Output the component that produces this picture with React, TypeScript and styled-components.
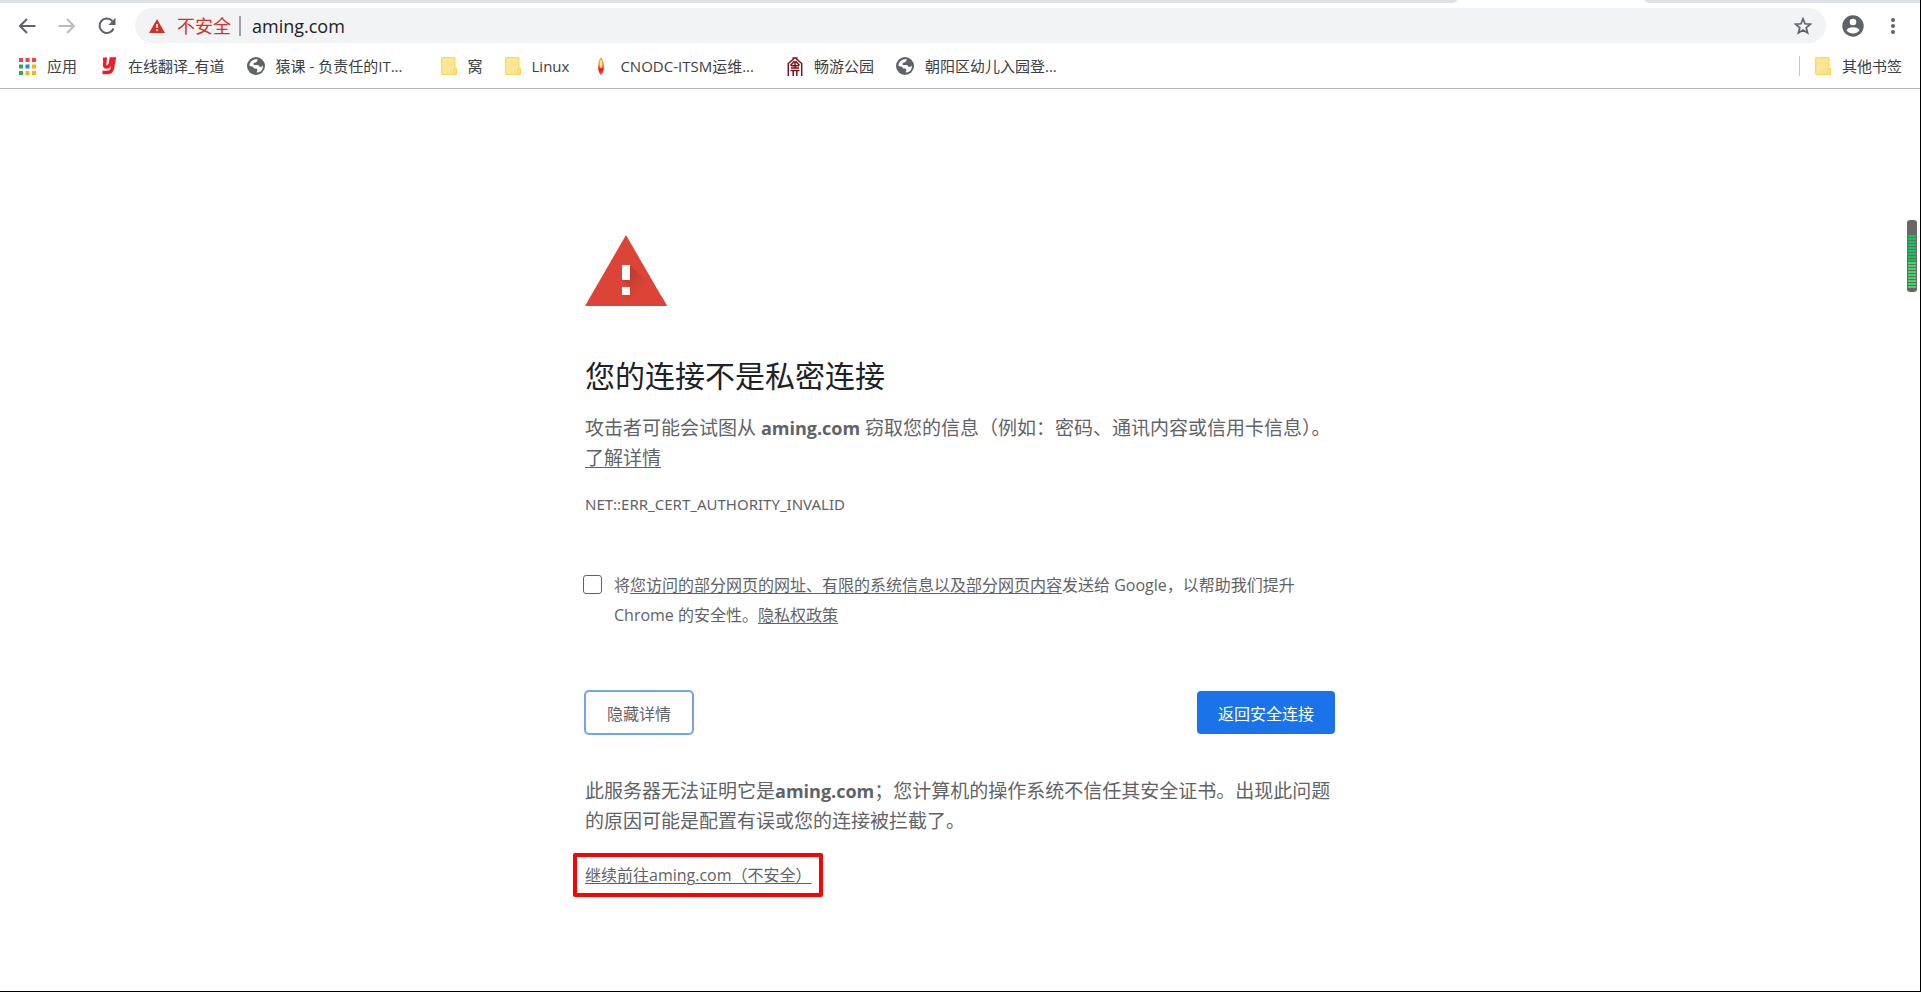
import React from "react";
import styled, { createGlobalStyle, css } from "styled-components";

const GlobalStyle = createGlobalStyle`
  * { box-sizing: border-box; }
  body {
    margin: 0;
    background: #fff;
    font-family: "Open Sans", "Noto Sans CJK SC", sans-serif;
  }
  button, input { font-family: inherit; }
`;

const Window = styled.div`
  min-height: 100vh;
  display: flex;
  flex-direction: column;
  border-right: 1px solid #000;
  border-bottom: 1px solid #000;
`;

const TabStrip = styled.div`
  display: flex;
  justify-content: flex-end;
  height: 3px;
  padding-right: 272px;
  background: #dee1e6;
`;

const ActiveTab = styled.div`
  width: 194px;
  background: #fff;
  clip-path: polygon(4px 0, 190px 0, 100% 100%, 0 100%);
`;

const Toolbar = styled.div`
  display: flex;
  align-items: center;
  gap: 20px;
  padding: 5px 17px 5px 17px;
`;

const IconButton = styled.button<{ $faded?: boolean }>`
  display: flex;
  align-items: center;
  justify-content: center;
  width: 20px;
  height: 20px;
  padding: 0;
  border: 0;
  background: none;
  color: ${(p) => (p.$faded ? "#babcbe" : "#5f6368")};
  svg { flex: none; }
`;

const Omnibox = styled.div`
  flex: 1;
  display: flex;
  align-items: center;
  height: 35px;
  margin-right: -3px;
  margin-left: -2px;
  padding: 0 13px 0 14px;
  border-radius: 18px;
  background: #f1f3f4;
`;

const SecurityLabel = styled.span`
  padding: 0 8px 0 12px;
  color: #d93025;
  font-size: 18px;
  line-height: 20px;
`;

const OmniDivider = styled.span`
  width: 2px;
  height: 20px;
  background: #9aa0a6;
`;

const UrlInput = styled.input`
  flex: 1;
  min-width: 0;
  height: 30px;
  padding: 0 11px;
  border: 0;
  outline: 0;
  background: none;
  color: #202124;
  font-size: 18px;
`;

const BookmarkBar = styled.nav`
  display: flex;
  align-items: center;
  height: 41px;
  padding: 0 18px 4px 19px;
  border-bottom: 1px solid #b6b6b6;
`;

const Bookmark = styled.a<{ $gap?: number }>`
  display: flex;
  align-items: center;
  gap: 11px;
  margin-right: ${(p) => p.$gap ?? 22}px;
  color: #3c4043;
  font-size: 15px;
  line-height: 20px;
  white-space: nowrap;
  text-decoration: none;
  svg { flex: none; }
`;

const OtherBookmarks = styled.div`
  display: flex;
  margin-left: auto;
  padding-left: 15px;
  border-left: 1px solid #c6c8ca;
`;

const Main = styled.main`
  width: 100%;
  max-width: 750px;
  margin: 0 auto;
  padding: 146px 0 40px;
  color: #5f6368;
`;

const Title = styled.h1`
  margin: 50px 0 17px;
  color: #202124;
  font-size: 30px;
  font-weight: 400;
  line-height: 40px;
`;

const Paragraph = styled.p`
  margin: 0;
  font-size: 19px;
  line-height: 30px;
`;

const Host = styled.strong`
  font-size: 18px;
`;

const TextLink = styled.a`
  color: inherit;
  text-decoration: underline;
  text-underline-offset: 2px;
  text-decoration-thickness: 1px;
`;

const ErrorCode = styled.div`
  margin: 20px 0 55px;
  font-family: "Noto Sans", "Open Sans", sans-serif;
  font-size: 15px;
  line-height: 22px;
`;

const OptIn = styled.div`
  display: flex;
  gap: 12px;
  margin-left: -2px;
  font-size: 16px;
  line-height: 30px;
`;

const CheckBox = styled.input`
  flex: none;
  appearance: none;
  width: 19px;
  height: 19px;
  margin: 5px 0 0;
  border: 1px solid #5f6368;
  border-radius: 3px;
  background: #fff;
`;

const Actions = styled.div`
  display: flex;
  justify-content: space-between;
  align-items: flex-start;
  margin: 61px 0 42px;
`;

const Button = styled.button<{ $primary?: boolean }>`
  height: 43px;
  padding: 0 21px;
  border: 0;
  border-radius: 4px;
  font-size: 16px;
  ${(p) =>
    p.$primary
      ? css`
          background: #1a73e8;
          color: #fff;
        `
      : css`
          background: #fff;
          color: #5f6368;
          border: 1px solid #7aa2dd;
          box-shadow: 0 0 0 1px #6fa3f5;
        `}
`;

const Proceed = styled.p`
  width: fit-content;
  margin: 17px 0 0 -12px;
  padding: 6px 7px 6px 8px;
  border: 4px solid #fe0000;
  border-radius: 2px;
  font-size: 16px;
  line-height: 24px;
`;

const Gauge = styled.div`
  position: absolute;
  top: 220px;
  right: 4px;
`;

const Apps = () => {
  const colors = ["#f44336", "#f44336", "#f44336", "#34a853", "#1e88e5", "#fbb30a", "#34a853", "#fbb30a", "#fbb30a"];
  return (
    <svg width="17" height="17" viewBox="0 0 17 17">
      {colors.map((c, i) => (
        <rect key={i} x={(i % 3) * 6.5} y={Math.floor(i / 3) * 6.5} width="4" height="4" fill={c} />
      ))}
    </svg>
  );
};

const Youdao = () => (
  <svg width="16" height="18" viewBox="0 0 16 18" fill="none" stroke="#ee1c25" strokeWidth="3.4">
    <path d="M2 2.2h2.2L3.6 7.4q-.3 2.6 2 2.6 2.6 0 3.6-3L10.2 2h3L11.4 11.5Q10.4 15.5 6 15.5H1.5" />
  </svg>
);

const Globe = () => (
  <svg width="18" height="18" viewBox="0 0 18 18">
    <circle cx="9" cy="9" r="9" fill="#5f6368" />
    <path fill="#fff" d="M8.3 2.2 11 2.2Q9.8 3.2 10.5 4L8.5 5.5 6.6 6v2h4.6l1.2 1.7h2.2L15.8 8.6q.6 5.5-4.7 6.9l-1.700-.2 1.2-2.4-1.2-1.5H7.2L6 9.7 2.4 8.9q.2-5.3 5.900-6.700Z" />
  </svg>
);

const Folder = () => (
  <svg width="16" height="18" viewBox="0 0 16 18">
    <path d="M1.5 0h11.500q1.500 0 1.500 1.500V11h1.500v7H1.500Q0 18 0 16.500v-15Q0 0 1.500 0Z" fill="#fbd75b" />
    <path d="M1.300 1.200h11.900V12l-1.200 1v3.700H1.300Z" fill="#ffe595" />
    <path d="M13 13h1.700v3.700H13Z" fill="#ffe595" />
  </svg>
);

const Flame = () => (
  <svg width="16" height="18" viewBox="-4 0 16 18">
    <defs>
      <linearGradient id="flame" x1="0" y1="0" x2="0" y2="1">
        <stop offset="0" stopColor="#f9b04b" />
        <stop offset=".5" stopColor="#f8791b" />
        <stop offset=".7" stopColor="#f2121a" />
        <stop offset="1" stopColor="#f66060" />
      </linearGradient>
    </defs>
    <path d="M4 0Q7.500 5 6.800 12 6 17 4 18 2 17 1.200 12 .5 5 4 0Z" fill="url(#flame)" />
    <ellipse cx="4" cy="7" rx="1.300" ry="4" fill="#fde9a0" />
  </svg>
);

const Gate = () => (
  <svg width="16" height="19" viewBox="0 0 16 19" fill="none" stroke="#7b1216" strokeWidth="1.500">
    <path d="M1.300 19V6.500L7 1.500M14.700 19V6.500L9 1.500M5.500 1h5M3.500 8.500 7.500 4M12.500 8.500 8.500 4M4 8.700h8M4 11h8M8 5v6M3.500 13.500h9M6.200 13.500V19M9.800 13.500V19" />
  </svg>
);

const Danger = () => (
  <svg width="16" height="14" viewBox="0 0 16 14">
    <path d="M8 0 16 14H0Z" fill="#d93025" />
    <path d="M7.200 5h1.600v4H7.200ZM7.200 10.300h1.600v1.600H7.200Z" fill="#fff" />
  </svg>
);

const WarningSvg = styled.svg`
  display: block;
`;

const Warning = () => (
  <WarningSvg width="82" height="71" viewBox="0 0 82 71">
    <defs>
      <linearGradient id="shade" x1="38" y1="32" x2="68" y2="62" gradientUnits="userSpaceOnUse">
        <stop offset="0" stopColor="#b43a2e" />
        <stop offset=".7" stopColor="#db4437" />
      </linearGradient>
    </defs>
    <path d="M41 0 82 71H0Z" fill="#db4437" />
    <path d="M45 30 65 50 77 62 82 71H48L37 60l8-8-8-7Z" fill="url(#shade)" />
    <path d="M37 30h8v15h-8ZM37 52h8v8h-8Z" fill="#fff" />
  </WarningSvg>
);

const LevelMeter = () => (
  <svg width="10" height="72" viewBox="0 0 10 72">
    <rect width="10" height="72" rx="3" fill="#686868" />
    {Array.from({ length: 18 }, (_, i) => (
      <rect key={i} x="1" y={15 + i * 3} width="8" height="2" fill={i < 9 ? "#12c45c" : "#46d465"} />
    ))}
  </svg>
);

const bookmarks = [
  { icon: <Apps />, label: "应用", gap: 24 },
  { icon: <Youdao />, label: "在线翻译_有道" },
  { icon: <Globe />, label: "猿课 - 负责任的IT...", gap: 38 },
  { icon: <Folder />, label: "窝" },
  { icon: <Folder />, label: "Linux", gap: 24 },
  { icon: <Flame />, label: "CNODC-ITSM运维...", gap: 33 },
  { icon: <Gate />, label: "畅游公园" },
  { icon: <Globe />, label: "朝阳区幼儿入园登..." },
];

export default function App() {
  return (
    <Window>
      <GlobalStyle />
      <TabStrip>
        <ActiveTab />
      </TabStrip>
      <Toolbar>
        <IconButton aria-label="后退">
          <svg width="18" height="16" viewBox="0 0 18 16" fill="none" stroke="currentColor" strokeWidth="2">
            <path d="M17.500 8H3M9 1 2 8l7 7" />
          </svg>
        </IconButton>
        <IconButton aria-label="前进" $faded>
          <svg width="18" height="16" viewBox="0 0 18 16" fill="none" stroke="currentColor" strokeWidth="2">
            <path d="M.5 8H15M9 1l7 7-7 7" />
          </svg>
        </IconButton>
        <IconButton aria-label="重新加载">
          <svg width="18" height="18" viewBox="0 0 18 18">
            <path d="M15.600 11.500A7.300 7.300 0 1 1 14.400 4" fill="none" stroke="currentColor" strokeWidth="2" />
            <path d="M17.500.8V8h-7.200Z" fill="currentColor" />
          </svg>
        </IconButton>
        <Omnibox>
          <Danger />
          <SecurityLabel>不安全</SecurityLabel>
          <OmniDivider />
          <UrlInput aria-label="地址" defaultValue="aming.com" />
          <IconButton aria-label="添加书签">
            <svg width="18" height="18" viewBox="0 0 18 18" fill="none" stroke="currentColor" strokeWidth="1.700">
              <path d="m9 1.800 2 5 5.400.4-4.200 3.500 1.400 5.300L9 13.100 4.400 16l1.400-5.300L1.600 7.200 7 6.800Z" />
            </svg>
          </IconButton>
        </Omnibox>
        <IconButton aria-label="用户">
          <svg width="22" height="22" viewBox="0 0 22 22">
            <circle cx="11" cy="11" r="10.700" fill="currentColor" />
            <circle cx="11" cy="7" r="3.300" fill="#fff" />
            <path d="M4.500 15.200Q6 12.300 11 12.300t6.500 2.900Q15 18.500 11 18.500T4.500 15.200Z" fill="#fff" />
          </svg>
        </IconButton>
        <IconButton aria-label="菜单">
          <svg width="4" height="18" viewBox="0 0 4 18" fill="currentColor">
            <circle cx="2" cy="3" r="2" />
            <circle cx="2" cy="9" r="2" />
            <circle cx="2" cy="15" r="2" />
          </svg>
        </IconButton>
      </Toolbar>
      <BookmarkBar>
        {bookmarks.map((b) => (
          <Bookmark key={b.label} href="#" $gap={b.gap}>
            {b.icon}
            {b.label}
          </Bookmark>
        ))}
        <OtherBookmarks>
          <Bookmark href="#" $gap={0}>
            <Folder />
            其他书签
          </Bookmark>
        </OtherBookmarks>
      </BookmarkBar>
      <Main>
        <Warning />
        <Title>您的连接不是私密连接</Title>
        <Paragraph>
          攻击者可能会试图从 <Host>aming.com</Host> 窃取您的信息（例如：密码、通讯内容或信用卡信息）。
          <TextLink href="#">了解详情</TextLink>
        </Paragraph>
        <ErrorCode>NET::ERR_CERT_AUTHORITY_INVALID</ErrorCode>
        <OptIn>
          <CheckBox type="checkbox" id="report" />
          <label htmlFor="report">
            将<TextLink href="#">您访问的部分网页的网址、有限的系统信息以及部分网页内容</TextLink>发送给 Google，以帮助我们提升
            <br />
            Chrome 的安全性。<TextLink href="#">隐私权政策</TextLink>
          </label>
        </OptIn>
        <Actions>
          <Button>隐藏详情</Button>
          <Button $primary>返回安全连接</Button>
        </Actions>
        <Paragraph>
          此服务器无法证明它是<Host>aming.com</Host>；您计算机的操作系统不信任其安全证书。出现此问题的原因可能是配置有误或您的连接被拦截了。
        </Paragraph>
        <Proceed>
          <TextLink href="#">继续前往aming.com（不安全）</TextLink>
        </Proceed>
      </Main>
      <Gauge>
        <LevelMeter />
      </Gauge>
    </Window>
  );
}
